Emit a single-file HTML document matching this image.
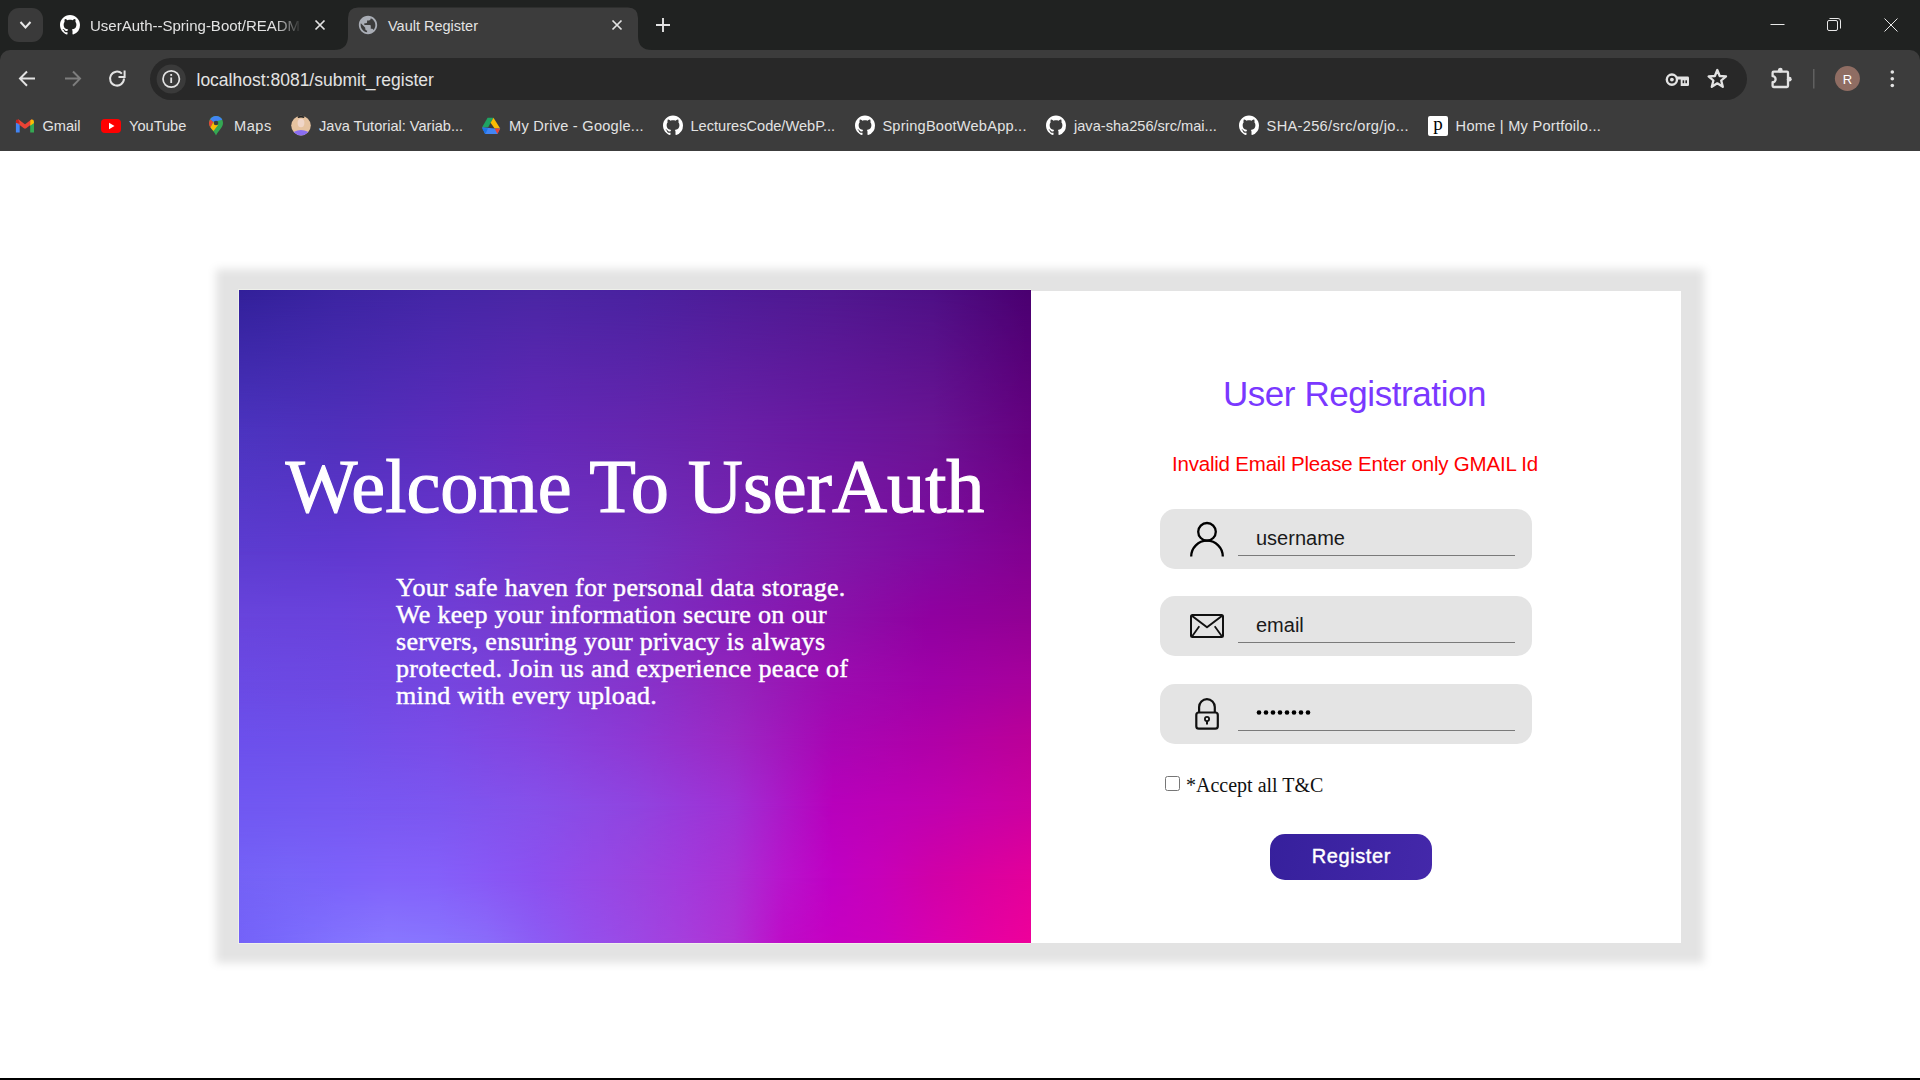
<!DOCTYPE html>
<html><head><meta charset="utf-8">
<style>
*{margin:0;padding:0;box-sizing:border-box}
html,body{width:1920px;height:1080px;overflow:hidden;background:#fff;font-family:"Liberation Sans",sans-serif}
.abs{position:absolute}
#tabstrip{position:absolute;left:0;top:0;width:1920px;height:62px;background:#202221}
#toolbar{position:absolute;left:0;top:50px;width:1920px;height:101px;background:#3c3c3c;border-radius:10px 10px 0 0}
#omni{position:absolute;left:150px;top:58px;width:1597px;height:42px;border-radius:21px;background:#282828}
.tabtxt{position:absolute;color:#e3e3e3;font-size:14px;white-space:nowrap}
.bm{position:absolute;top:117px;color:#e3e3e3;font-size:14.6px;white-space:nowrap;line-height:18px}
#page{position:absolute;left:0;top:151px;width:1920px;height:927px;background:#fff}
#bottomline{position:absolute;left:0;top:1078px;width:1920px;height:2px;background:#000}
#card{position:absolute;left:239px;top:291px;width:1442px;height:652px;background:#fff;}
#shadow{position:absolute;left:215.5px;top:269px;width:1488.5px;height:694px;background:rgba(0,0,0,.11);filter:blur(4.5px)}
#left{position:absolute;left:0;top:-1px;width:792px;height:653px;overflow:hidden}
.row{position:absolute;left:0;top:0;width:792px;height:653px}
#right{position:absolute;left:792px;top:0;width:650px;height:652px;background:#fff}
.field{position:absolute;left:1160px;width:372px;height:60px;background:#e4e4e4;border-radius:15px}
.uline{position:absolute;left:78px;width:277px;height:1px;background:#7a7a7a}
.ftxt{position:absolute;left:96px;font-size:20px;color:#1a1a1a;line-height:24px}
</style></head><body>
<div id="tabstrip"></div>
<div id="toolbar"></div>
<div id="omni"></div>
<div id="page"></div>
<div id="bottomline"></div>

<!-- ===== browser chrome ===== -->
<div class="abs" style="left:8px;top:8px;width:35px;height:34px;border-radius:11px;background:#3a3a3a"></div>
<svg class="abs" style="left:0;top:0" width="1920" height="151" viewBox="0 0 1920 151">
  <!-- dropdown chevron -->
  <path d="M20.5 22 L25.5 27.5 L30.5 22" fill="none" stroke="#e8e8e8" stroke-width="2"/>
  <!-- tab1 github -->
  <g transform="translate(60,15) scale(1.25)"><path fill="#fff" d="M8 0C3.58 0 0 3.58 0 8c0 3.54 2.29 6.53 5.47 7.59.4.07.55-.17.55-.38 0-.19-.01-.82-.01-1.49-2.01.37-2.53-.49-2.69-.94-.09-.23-.48-.94-.82-1.13-.28-.15-.68-.52-.01-.53.63-.01 1.08.58 1.23.82.72 1.21 1.87.87 2.33.66.07-.52.28-.87.51-1.07-1.78-.2-3.64-.89-3.64-3.95 0-.87.31-1.59.82-2.15-.08-.2-.36-1.02.08-2.12 0 0 .67-.21 2.2.82.64-.18 1.32-.27 2-.27.68 0 1.36.09 2 .27 1.53-1.04 2.2-.82 2.2-.82.44 1.1.16 1.92.08 2.12.51.56.82 1.27.82 2.15 0 3.07-1.87 3.75-3.65 3.95.29.25.54.73.54 1.48 0 1.07-.01 1.93-.01 2.2 0 .21.15.46.55.38A8.013 8.013 0 0016 8c0-4.42-3.58-8-8-8z"/></g>
  <!-- tab1 close -->
  <path d="M315.5 20.5 L324.5 29.5 M324.5 20.5 L315.5 29.5" stroke="#e3e3e3" stroke-width="1.7"/>
  <!-- active tab shape -->
  <path d="M334 50 Q348 50 348 36 L348 18 Q348 7.5 358 7.5 L628 7.5 Q638 7.5 638 18 L638 36 Q638 50 652 50 Z" fill="#3c3c3c"/>
  <!-- globe -->
  <g transform="translate(357,14) scale(0.917)"><path fill="#a9adb5" d="M12 2C6.48 2 2 6.48 2 12s4.48 10 10 10 10-4.48 10-10S17.52 2 12 2zm-1 17.93c-3.95-.49-7-3.85-7-7.93 0-.62.08-1.21.21-1.79L9 15v1c0 1.1.9 2 2 2v1.93zm6.9-2.54c-.26-.81-1-1.39-1.9-1.39h-1v-3c0-.55-.45-1-1-1H8v-2h2c.55 0 1-.45 1-1V7h2c1.1 0 2-.9 2-2v-.41c2.93 1.19 5 4.06 5 7.41 0 2.08-.8 3.97-2.1 5.39z"/></g>
  <!-- active close -->
  <path d="M612.5 20.5 L621.5 29.5 M621.5 20.5 L612.5 29.5" stroke="#e3e3e3" stroke-width="1.7"/>
  <!-- new tab plus -->
  <path d="M663 18 V32 M656 25 H670" stroke="#e3e3e3" stroke-width="1.9"/>
  <!-- window controls -->
  <path d="M1770.5 24.5 H1784.5" stroke="#e8e8e8" stroke-width="1"/>
  <rect x="1827.5" y="20.5" width="10" height="10" rx="1.5" fill="none" stroke="#e8e8e8" stroke-width="1"/>
  <path d="M1829.5 18.5 H1838 Q1840.5 18.5 1840.5 21 V28.5" fill="none" stroke="#e8e8e8" stroke-width="1"/>
  <path d="M1884.5 18.5 L1897.5 31.5 M1897.5 18.5 L1884.5 31.5" stroke="#e8e8e8" stroke-width="1"/>
  <!-- nav: back -->
  <path d="M35 78.6 H21 M27 71.5 L20 78.6 L27 85.7" fill="none" stroke="#e3e3e3" stroke-width="2"/>
  <!-- forward -->
  <path d="M65 78.6 H79 M73 71.5 L80 78.6 L73 85.7" fill="none" stroke="#7d7d7d" stroke-width="2"/>
  <!-- reload -->
  <path d="M124 78.6 A7 7 0 1 1 121.9 73.6" fill="none" stroke="#e3e3e3" stroke-width="2"/>
  <path d="M124.6 70.5 V77 H118.5" fill="none" stroke="#e3e3e3" stroke-width="2"/>
  <!-- info circle -->
  <circle cx="171.2" cy="79" r="14.6" fill="#3a3a3a"/>
  <circle cx="171.2" cy="79" r="8.2" fill="none" stroke="#e3e3e3" stroke-width="1.7"/>
  <rect x="170.3" y="77.5" width="1.8" height="5.5" fill="#e3e3e3"/>
  <rect x="170.3" y="74" width="1.8" height="1.9" fill="#e3e3e3"/>
  <!-- key -->
  <circle cx="1671.9" cy="79.6" r="5.1" fill="none" stroke="#e3e3e3" stroke-width="2.4"/>
  <circle cx="1671.9" cy="79.6" r="1.9" fill="#e3e3e3"/>
  <path d="M1676 76.6 H1687.7 Q1689 76.6 1689 77.9 V84.7 Q1689 86 1687.7 86 H1680.7 V79.5 H1676 Z" fill="#e3e3e3"/>
  <rect x="1682.6" y="80.3" width="1.6" height="2.9" fill="#282828"/>
  <rect x="1685.4" y="80.3" width="1.6" height="2.9" fill="#282828"/>
  <!-- star -->
  <path d="M1717.3 70 L1719.7 76 L1726 76.4 L1721.2 80.5 L1722.8 86.8 L1717.3 83.3 L1711.8 86.8 L1713.4 80.5 L1708.6 76.4 L1714.9 76 Z" fill="none" stroke="#e3e3e3" stroke-width="2.3" stroke-linejoin="round"/>
  <!-- extension puzzle -->
  <path d="M1773.6 71.7 H1787 Q1788 71.7 1788 72.7 V86 Q1788 87 1787 87 H1773.6 Q1772.6 87 1772.6 86 V82.2 A3 3 0 0 0 1772.6 76.2 V72.7 Q1772.6 71.7 1773.6 71.7 Z" fill="none" stroke="#e3e3e3" stroke-width="2.3" stroke-linejoin="round"/>
  <circle cx="1780.3" cy="70.2" r="2.4" fill="#e3e3e3"/>
  <circle cx="1789.3" cy="79.2" r="2.4" fill="#e3e3e3"/>
  <!-- separator -->
  <path d="M1813.8 69 V88.5" stroke="#6a6a6a" stroke-width="1.2"/>
  <!-- avatar -->
  <circle cx="1847.4" cy="78.5" r="12.5" fill="#8f6d63"/>
  <!-- menu dots -->
  <circle cx="1892.3" cy="72" r="1.8" fill="#e3e3e3"/>
  <circle cx="1892.3" cy="78.8" r="1.8" fill="#e3e3e3"/>
  <circle cx="1892.3" cy="85.5" r="1.8" fill="#e3e3e3"/>
</svg>

<svg class="abs" style="left:0;top:100px" width="1920" height="51" viewBox="0 100 1920 51">
  <defs><path id="gh" d="M8 0C3.58 0 0 3.58 0 8c0 3.54 2.29 6.53 5.47 7.59.4.07.55-.17.55-.38 0-.19-.01-.82-.01-1.49-2.01.37-2.53-.49-2.69-.94-.09-.23-.48-.94-.82-1.13-.28-.15-.68-.52-.01-.53.63-.01 1.08.58 1.23.82.72 1.21 1.87.87 2.33.66.07-.52.28-.87.51-1.07-1.78-.2-3.64-.89-3.64-3.95 0-.87.31-1.59.82-2.15-.08-.2-.36-1.02.08-2.12 0 0 .67-.21 2.2.82.64-.18 1.32-.27 2-.27.68 0 1.36.09 2 .27 1.53-1.04 2.2-.82 2.2-.82.44 1.1.16 1.92.08 2.12.51.56.82 1.27.82 2.15 0 3.07-1.87 3.75-3.65 3.95.29.25.54.73.54 1.48 0 1.07-.01 1.93-.01 2.2 0 .21.15.46.55.38A8.013 8.013 0 0016 8c0-4.42-3.58-8-8-8z"/></defs>
  <!-- gmail -->
  <path d="M17.8 121 V132.5" stroke="#4285f4" stroke-width="3.8"/>
  <path d="M32.1 121 V132.5" stroke="#34a853" stroke-width="3.8"/>
  <path d="M17.2 120.8 L25 126.8 L32.8 120.8" fill="none" stroke="#ea4335" stroke-width="3.8" stroke-linejoin="round"/>
  <path d="M30.5 120 Q32 119 33.5 120 L34 123 L30.2 125.8 Z" fill="#fbbc04"/>
  <path d="M16 120 Q17 119 18.5 120 L19.8 123.5 L16 123 Z" fill="#c5221f"/>
  <!-- youtube -->
  <rect x="101" y="119" width="20" height="14" rx="4" fill="#ff0000"/>
  <path d="M109 122.8 L114.5 126 L109 129.2 Z" fill="#fff"/>
  <!-- maps -->
  <path d="M216 116 C211.8 116 209 119.2 209 123 C209 128 214 130.5 216 135.6 C218 130.5 223 128 223 123 C223 119.2 220.2 116 216 116 Z" fill="#34a853"/>
  <path d="M216 116 C213.5 116 211.3 117.3 210.2 119.5 L213.4 122 L222.3 119.8 C221 117.5 218.8 116 216 116 Z" fill="#4285f4"/>
  <path d="M210.2 119.5 C209.4 121 209 122 209 123 C209 124.8 209.6 126.2 210.5 127.5 L213.4 122 Z" fill="#ea4335"/>
  <path d="M210.5 127.5 C211.5 129 212.8 130 213.5 131 L218 125 L213.4 122 Z" fill="#fbbc04"/>
  <circle cx="216" cy="123" r="2.3" fill="#3c3c3c"/>
  <!-- java avatar -->
  <clipPath id="av"><circle cx="301" cy="125.6" r="9.8"/></clipPath>
  <g clip-path="url(#av)">
    <rect x="290" y="115" width="22" height="22" fill="#e6c3a0"/>
    <ellipse cx="301" cy="135.5" rx="9" ry="5.5" fill="#8a6ef2"/>
    <path d="M297 115.5 Q301 113 305 115.5 L304 118 Q301 117 298 118 Z" fill="#222"/>
    <ellipse cx="301" cy="123" rx="3.4" ry="4.2" fill="#f0d6c8"/>
  </g>
  <!-- drive -->
  <path d="M487.6 117.7 L493.5 117.7 L488.2 127.2 L482.1 127.2 Z" fill="#1ea362"/>
  <path d="M493.5 117.7 L500.2 128.6 L494.6 128.6 L490.6 122.8 Z" fill="#fbbc04"/>
  <path d="M482.1 127.2 L494.6 128.6 L500.2 128.6 L497.4 134 L485 134 Z" fill="#4285f4"/>
  <path d="M494.6 128.6 L500.2 128.6 L497.4 134 Z" fill="#ea4335"/>
  <path d="M482 128.3 L485.5 134 L488 128.3 Z" fill="#1a73e8"/>
  <!-- github x4 -->
  <use href="#gh" transform="translate(663,115.5) scale(1.25)" fill="#fff"/>
  <use href="#gh" transform="translate(855,115.5) scale(1.25)" fill="#fff"/>
  <use href="#gh" transform="translate(1046,115.5) scale(1.25)" fill="#fff"/>
  <use href="#gh" transform="translate(1239,115.5) scale(1.25)" fill="#fff"/>
  <!-- portfolio p -->
  <rect x="1428" y="116" width="20" height="20" rx="2" fill="#fff"/>
</svg>
<div class="abs" style="left:1428px;top:114px;width:20px;text-align:center;font-family:'Liberation Serif',serif;font-size:19px;line-height:20px;color:#000">p</div>
<div class="bm" style="left:42.5px">Gmail</div>
<div class="bm" style="left:129px">YouTube</div>
<div class="bm" style="left:234px;letter-spacing:0.5px">Maps</div>
<div class="bm" style="left:319px">Java Tutorial: Variab...</div>
<div class="bm" style="left:509px;letter-spacing:0.25px">My Drive - Google...</div>
<div class="bm" style="left:690.5px">LecturesCode/WebP...</div>
<div class="bm" style="left:882.4px;letter-spacing:0.22px">SpringBootWebApp...</div>
<div class="bm" style="left:1074px">java-sha256/src/mai...</div>
<div class="bm" style="left:1266.6px;letter-spacing:0.32px">SHA-256/src/org/jo...</div>
<div class="bm" style="left:1455.6px;letter-spacing:0.25px">Home | My Portfoilo...</div>

<div class="tabtxt" style="left:90px;top:17px;width:209px;overflow:hidden;font-size:15px;line-height:18px;-webkit-mask-image:linear-gradient(to right,#000 185px,transparent 212px)">UserAuth--Spring-Boot/README.md</div>
<div class="tabtxt" style="left:388px;top:17px;font-size:14.5px;line-height:18px">Vault Register</div>
<div class="abs" style="left:1840px;top:70.5px;width:15px;text-align:center;color:#fff;font-size:13px;line-height:18px">R</div>
<div class="abs" style="left:196.5px;top:69.5px;color:#e3e3e3;font-size:17.5px;line-height:20px;white-space:nowrap">localhost:8081/submit_register</div>


<div id="shadow"></div>
<div id="card">
  <div style="position:absolute;left:-1px;top:-2px;width:793px;height:655px;background:#eef0ea"></div>
  <div id="left">
    <div class="row" style="background:linear-gradient(to right,#32209a,#3c24a2,#4426a6,#4a26a4,#4a22a0,#4e1c98,#501890,#4e1086,#4a0070)"></div>
    <div class="row" style="background:linear-gradient(to right,#4c34c0,#5030bc,#5a2cbc,#6428b8,#6626b0,#6a20a8,#6a18a0,#6a1494,#660080);-webkit-mask-image:linear-gradient(to bottom,transparent 0.0%,#000 22.0%)"></div>
    <div class="row" style="background:linear-gradient(to right,#5c3cd0,#6038d0,#6838d0,#7034c8,#7430c0,#7a24b4,#7e18a8,#800aa0,#820090);-webkit-mask-image:linear-gradient(to bottom,transparent 22.0%,#000 40.0%)"></div>
    <div class="row" style="background:linear-gradient(to right,#6844dc,#6a42dc,#7040d8,#7838cc,#7c30c4,#8420b8,#8a12aa,#9000a0,#920094);-webkit-mask-image:linear-gradient(to bottom,transparent 40.0%,#000 50.0%)"></div>
    <div class="row" style="background:linear-gradient(to right,#6a4ae4,#6e48e2,#7546e0,#7e3ed6,#8634cc,#9424bc,#9c0cb0,#a000a8,#a8009c);-webkit-mask-image:linear-gradient(to bottom,transparent 50.0%,#000 60.0%)"></div>
    <div class="row" style="background:linear-gradient(to right,#6c50ec,#7050ea,#7a4ce8,#8444e0,#8e38d4,#9c28c4,#a806b4,#b000a8,#bc0098);-webkit-mask-image:linear-gradient(to bottom,transparent 60.0%,#000 69.0%)"></div>
    <div class="row" style="background:linear-gradient(to right,#7058f2,#7658f2,#7c56f0,#8650ea,#9044e0,#a030d4,#b800bc,#c000b0,#cc00a0);-webkit-mask-image:linear-gradient(to bottom,transparent 69.0%,#000 79.0%)"></div>
    <div class="row" style="background:linear-gradient(to right,#7462f6,#7864f8,#7c62fa,#8262fa,#8460fa,#8858f6,#8c50f0,#944ae8,#9a44e0,#a23adc,#aa30d4,#b814cc,#c000c4,#c800b8,#d000a8,#da00a0,#e4009a);-webkit-mask-image:linear-gradient(to bottom,transparent 79.0%,#000 90.0%)"></div>
    <div class="row" style="background:linear-gradient(to right,#7462f8,#7a6afc,#8272fe,#8878ff,#8874fe,#8a6cfa,#8c5cf4,#9450ec,#9c48e4,#a63edc,#b030d4,#be0cc8,#c600c2,#cc00bc,#d800b0,#e400a4,#ee009a);-webkit-mask-image:linear-gradient(to bottom,transparent 90.0%,#000 100.0%)"></div>
  </div>
  <div id="right"></div>
</div>

<!-- left panel text -->
<div class="abs" style="left:239px;top:437px;width:792px;text-align:center;font-family:'Liberation Serif',serif;font-size:76.3px;color:#fff;-webkit-text-stroke:1.1px #fff;line-height:100px;white-space:nowrap">Welcome To UserAuth</div>
<div class="abs" style="left:396px;top:574px;font-family:'Liberation Serif',serif;font-size:26px;letter-spacing:0.3px;color:#fff;-webkit-text-stroke:0.45px #fff;line-height:27px;white-space:nowrap">Your safe haven for personal data storage.<br>We keep your information secure on our<br>servers, ensuring your privacy is always<br>protected. Join us and experience peace of<br>mind with every upload.</div>

<!-- right panel -->
<div class="abs" style="left:1029.5px;top:374px;width:650px;text-align:center;font-size:35px;letter-spacing:-0.42px;color:#7a38ff;line-height:40px;white-space:nowrap">User Registration</div>
<div class="abs" style="left:1030px;top:451px;width:650px;text-align:center;font-size:20.5px;letter-spacing:-0.2px;color:#ff0000;line-height:25px;white-space:nowrap">Invalid Email Please Enter only GMAIL Id</div>

<div class="field" style="top:509px">
  <div class="ftxt" style="top:16.5px">username</div>
  <div class="uline" style="top:46px"></div>
</div>
<div class="field" style="top:596px">
  <div class="ftxt" style="top:16.5px">email</div>
  <div class="uline" style="top:46px"></div>
</div>
<div class="field" style="top:684px">
  
  <div class="uline" style="top:46px"></div>
</div>


<svg class="abs" style="left:0;top:0" width="1920" height="1080" viewBox="0 0 1920 1080">
  <!-- user -->
  <circle cx="1207" cy="531.8" r="8.8" fill="none" stroke="#000" stroke-width="2.3"/>
  <path d="M1191.2 556.5 A15.8 15.8 0 0 1 1222.8 556.5" fill="none" stroke="#000" stroke-width="2.3"/>
  <!-- envelope -->
  <rect x="1191" y="615" width="32" height="22" rx="1.5" fill="none" stroke="#111" stroke-width="2"/>
  <path d="M1191.5 615.5 L1207 627.3 L1222.5 615.5" fill="none" stroke="#111" stroke-width="2" stroke-linejoin="round"/>
  <path d="M1191.8 636.8 L1199.3 626.3 M1214.7 626.3 L1222.2 636.8" fill="none" stroke="#111" stroke-width="1.8"/>
  <!-- lock -->
  <rect x="1196.3" y="712.5" width="21.5" height="16.2" rx="2.5" fill="none" stroke="#111" stroke-width="2.2"/>
  <path d="M1199.1 712 V707 A7.85 7.85 0 0 1 1214.8 707 V712" fill="none" stroke="#111" stroke-width="2.2"/>
  <circle cx="1207" cy="719" r="2.1" fill="none" stroke="#111" stroke-width="1.8"/>
  <path d="M1207 721 V724.6" stroke="#111" stroke-width="2"/>
  <!-- password dots -->
  <g fill="#000">
    <circle cx="1259" cy="712.5" r="2.3"/><circle cx="1266" cy="712.5" r="2.3"/><circle cx="1273" cy="712.5" r="2.3"/><circle cx="1280" cy="712.5" r="2.3"/>
    <circle cx="1287" cy="712.5" r="2.3"/><circle cx="1294" cy="712.5" r="2.3"/><circle cx="1301" cy="712.5" r="2.3"/><circle cx="1308" cy="712.5" r="2.3"/>
  </g>
</svg>

<div class="abs" style="left:1165.2px;top:776px;width:14.6px;height:14.6px;border:1.2px solid #767676;border-radius:2.5px;background:#fff"></div>
<div class="abs" style="left:1186px;top:774px;font-family:'Liberation Serif',serif;font-size:20px;color:#111;line-height:23px;white-space:nowrap">*Accept all T&amp;C</div>

<div class="abs" style="left:1270px;top:834px;width:162px;height:46px;border-radius:15px;background:linear-gradient(100deg,#36209c,#4428aa);color:#fff;font-size:20px;letter-spacing:0.6px;text-indent:0.6px;-webkit-text-stroke:0.4px #fff;text-align:center;line-height:45px">Register</div>

</body></html>
